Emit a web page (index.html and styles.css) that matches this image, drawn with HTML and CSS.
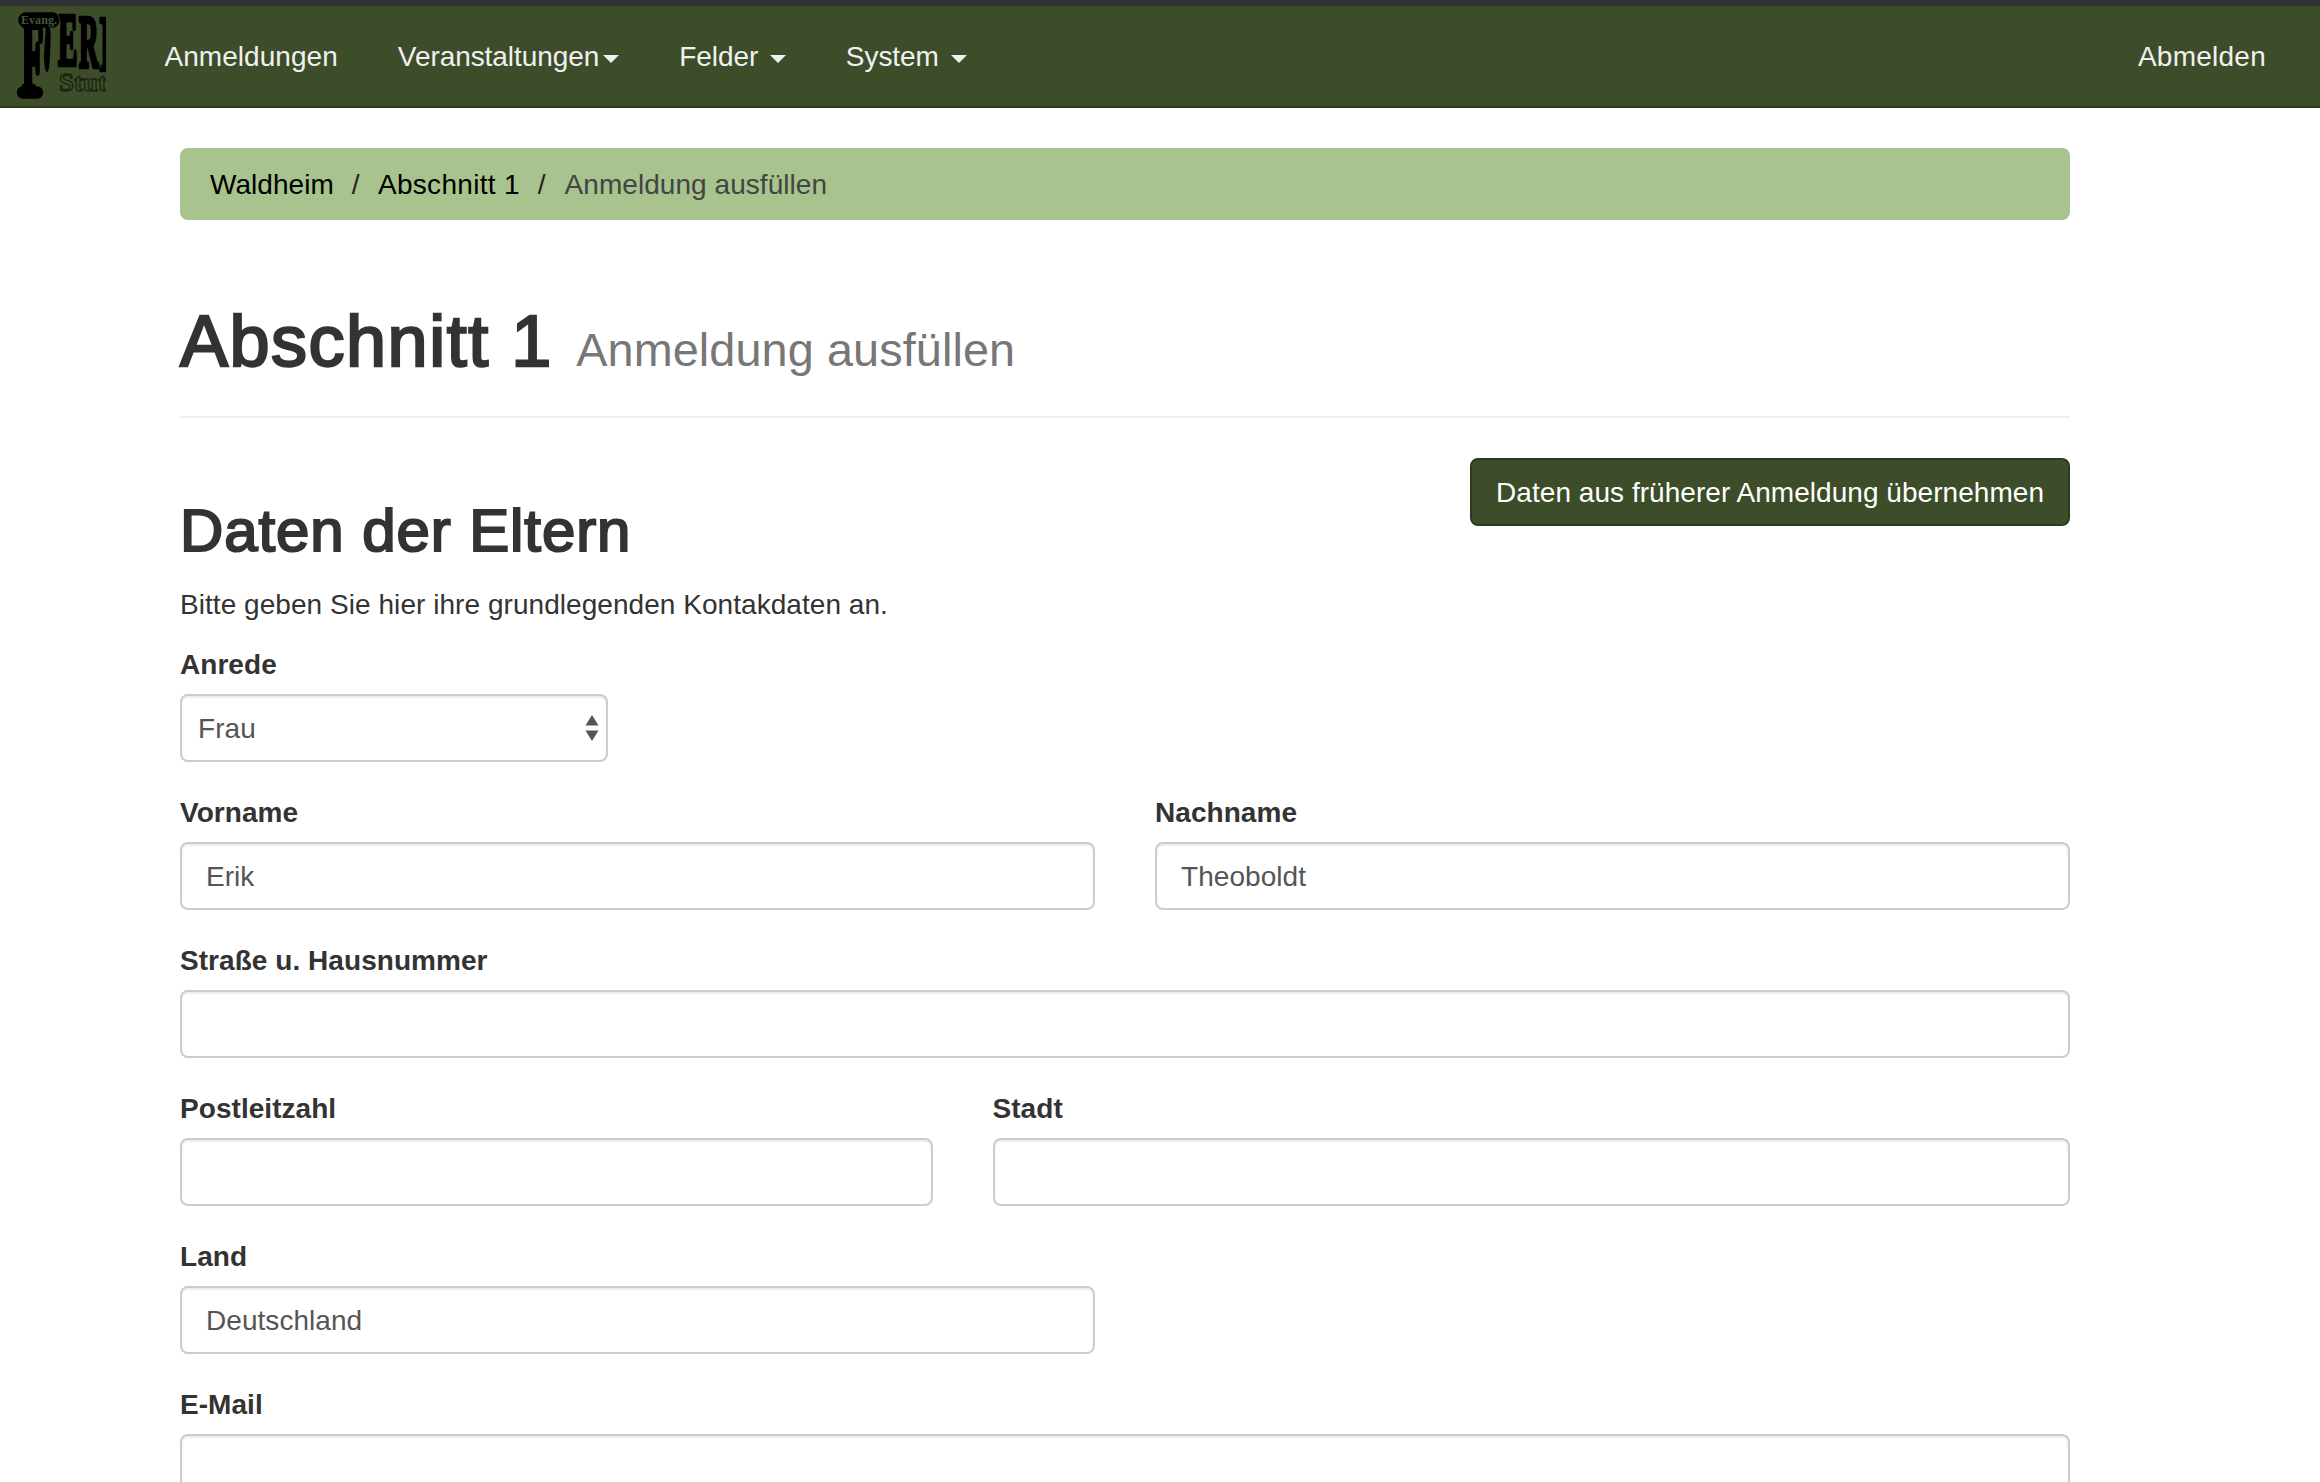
FILE: index.html
```html
<!DOCTYPE html>
<html lang="de">
<head>
<meta charset="utf-8">
<title>Anmeldung ausfüllen</title>
<link rel="stylesheet" href="styles.css">
</head>
<body>
<nav class="navbar">
  <a class="brand" href="#">
    <svg width="106" height="100" viewBox="0 6 106 100">
      <g class="logo-letters">
        <rect x="20" y="14" width="38" height="12" rx="6"/>
        <rect x="18.500" y="88" width="23" height="9" rx="4.500"/>
        <path d="M47 24q3.500 4 2.500 18-.5 26-2.500 29-2-4-2-16z" stroke-width="2"/>
        <text class="initial" transform="translate(22 93) scale(.36 1.18)" font-size="96">F</text>
        <text transform="translate(58 65) scale(.4 1)" font-size="73">E</text>
        <text transform="translate(79 67) scale(.36 1)" font-size="75">R</text>
        <text transform="translate(99 70) scale(.5 1)" font-size="78">I</text>
      </g>
      <g class="logo-seams">
        <path d="M57 13q5 8 2 19t-4 30M77 12v20l-2 10 4 22M97 15l1 24-2 12 5 17"/>
      </g>
      <text class="logo-small" x="21" y="24" textLength="36" lengthAdjust="spacingAndGlyphs">Evang.</text>
      <text class="logo-outline" x="59" y="91" textLength="48" lengthAdjust="spacingAndGlyphs">Stut</text>
    </svg>
  </a>
  <ul class="nav">
    <li><a href="#">Anmeldungen</a></li>
    <li><a href="#">Veranstaltungen<span class="caret"></span></a></li>
    <li><a href="#">Felder <span class="caret"></span></a></li>
    <li><a href="#">System <span class="caret"></span></a></li>
  </ul>
  <ul class="nav nav-right">
    <li><a href="#">Abmelden</a></li>
  </ul>
</nav>

<main class="container">
  <ol class="breadcrumb">
    <li><a href="#">Waldheim</a></li>
    <li><a href="#">Abschnitt 1</a></li>
    <li class="active">Anmeldung ausfüllen</li>
  </ol>

  <header class="page-header">
    <h1>Abschnitt 1 <small>Anmeldung ausfüllen</small></h1>
  </header>

  <div class="section-head">
    <h2>Daten der Eltern</h2>
    <button class="btn" type="button">Daten aus früherer Anmeldung übernehmen</button>
  </div>
  <p class="help">Bitte geben Sie hier ihre grundlegenden Kontakdaten an.</p>

  <form class="form">
    <div class="field span-3">
      <label for="anrede">Anrede</label>
      <div class="select">
        <select id="anrede" class="control"><option>Frau</option></select>
        <svg class="arrows" width="14" height="26" viewBox="0 0 14 26"><path d="M.5 10.500 7 0l6.500 10.500zM.5 15.500h13L7 26z"/></svg>
      </div>
    </div>
    <div class="field span-6 row-start">
      <label for="vorname">Vorname</label>
      <input id="vorname" class="control" value="Erik">
    </div>
    <div class="field span-6">
      <label for="nachname">Nachname</label>
      <input id="nachname" class="control" value="Theoboldt">
    </div>
    <div class="field span-12">
      <label for="strasse">Straße u. Hausnummer</label>
      <input id="strasse" class="control">
    </div>
    <div class="field span-5">
      <label for="plz">Postleitzahl</label>
      <input id="plz" class="control">
    </div>
    <div class="field span-7">
      <label for="stadt">Stadt</label>
      <input id="stadt" class="control">
    </div>
    <div class="field span-6">
      <label for="land">Land</label>
      <input id="land" class="control" value="Deutschland">
    </div>
    <div class="field span-12">
      <label for="email">E-Mail</label>
      <input id="email" class="control">
    </div>
  </form>
</main>
</body>
</html>
```
FILE: styles.css
```css
* { box-sizing: border-box; }

html { height: 100%; overflow: hidden; }

body {
  margin: 0;
  height: 100%;
  overflow: hidden;
  background: #fff;
  color: #333;
  font: 28px/40px "Helvetica Neue", "Liberation Sans", Arial, sans-serif;
  letter-spacing: .05px;
}

a { color: inherit; text-decoration: none; }

/* Navigation */
.navbar {
  display: flex;
  height: 108px;
  border-top: 6px solid #303437;
  border-bottom: 2px solid #2f3b20;
  background: #3d4d29;
  box-shadow: inset 0 1px #384626;
  color: #f0f0f0;
}
.brand { width: 134.5px; }
.brand svg { display: block; overflow: hidden; }
.logo-letters {
  fill: #000;
  stroke: #000;
  stroke-width: 3.5;
  stroke-linejoin: round;
  font-family: "Liberation Serif", serif;
  font-weight: bold;
}
.logo-letters text { vector-effect: non-scaling-stroke; }
.logo-letters .initial { stroke-width: 7; }
.logo-seams path { fill: none; stroke: #3d4d29; stroke-width: .8; }
.logo-small { fill: #46573a; font: bold 12px "Liberation Serif", serif; }
.logo-outline {
  fill: #3d4d29;
  stroke: #1b2312;
  stroke-width: 1.3;
  font: bold 26px "Liberation Serif", serif;
}
.nav { display: flex; margin: 0; padding: 0; list-style: none; letter-spacing: -.07px; }
.nav li:first-child { letter-spacing: .05px; }
.nav a { display: block; padding: 31px 30px 29px; }
.nav-right { margin-left: auto; padding-right: 24px; }
.nav-right li:first-child { letter-spacing: .25px; }
.caret {
  display: inline-block;
  margin-left: 4px;
  vertical-align: middle;
  border-top: 8px solid;
  border-right: 8px solid transparent;
  border-left: 8px solid transparent;
}

.container { width: 1890px; margin: 40px 0 0 180px; }

.breadcrumb {
  display: flex;
  height: 72px;
  margin: 0;
  padding: 17px 30px 15px;
  border-radius: 8px;
  background: #a8c38d;
  color: #000;
  list-style: none;
}
.breadcrumb li + li::before {
  content: "/";
  padding: 0 18px;
  color: #222;
}
.breadcrumb li:nth-child(2) { letter-spacing: .3px; }
.breadcrumb .active { color: #444; }
.breadcrumb .active::before { padding-right: 19px; }

.page-header {
  height: 116px;
  margin: 82px 0 40px;
  border-bottom: 2px solid #eee;
}
h1, h2 { margin: 0; font-weight: 400; -webkit-text-stroke: 2.4px #333; }
h1 { font-size: 72px; line-height: 79px; letter-spacing: 1.5px; }
h1 small {
  margin-left: 2px;
  color: #777;
  font-size: 46.8px;
  letter-spacing: .1px;
  -webkit-text-stroke: 0;
}

.section-head { display: flex; justify-content: space-between; align-items: flex-start; }
h2 {
  padding-top: 40px;
  font-size: 60px;
  line-height: 66px;
  letter-spacing: .9px;
  -webkit-text-stroke-width: 2.1px;
}
.btn {
  height: 68px;
  padding: 1px 24px 0;
  border: 2px solid #2d3a1f;
  border-radius: 8px;
  background: #3d4d29;
  color: #fff;
  font: inherit;
  letter-spacing: .04px;
}
.help { margin: 21px 0 20px; }

/* Twelve-column form grid with 60px gutters */
.form {
  display: grid;
  grid-template-columns: repeat(12, 1fr);
  column-gap: 60px;
  row-gap: 30px;
}
.field { min-width: 0; }
.row-start { grid-column-start: 1; }
.span-3 { grid-column-end: span 3; }
.span-5 { grid-column-end: span 5; }
.span-6 { grid-column-end: span 6; }
.span-7 { grid-column-end: span 7; }
.span-12 { grid-column-end: span 12; }
label { display: block; margin-bottom: 9px; font-weight: bold; }
.field + .field label { padding-top: 1px; }
.control {
  display: block;
  width: 100%;
  height: 68px;
  padding: 1px 24px 0;
  border: 2px solid #ccc;
  border-radius: 8px;
  background: #fff;
  box-shadow: inset 0 2px 2px rgba(0, 0, 0, .075);
  color: #555;
  font: inherit;
  letter-spacing: inherit;
  appearance: none;
}
.select { position: relative; }
.select .control { padding-left: 16px; }
.arrows { position: absolute; top: 21px; right: 9px; fill: #555; }
```
